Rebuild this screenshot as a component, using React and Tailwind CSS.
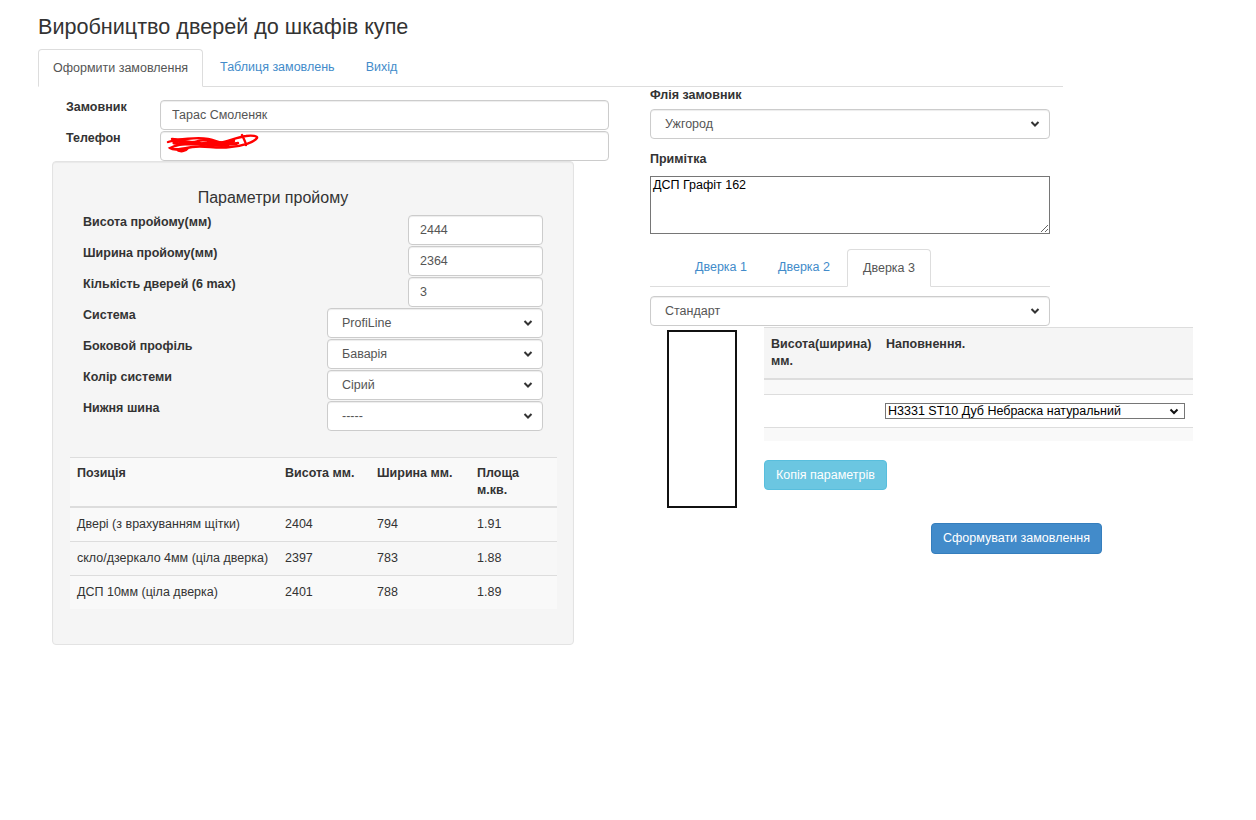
import React from "react"

const font = { fontFamily: '"Liberation Sans", Arial, sans-serif' }

function Chevron() {
  return (
    <svg width="10" height="7" viewBox="0 0 10 7" className="absolute right-[10px] top-1/2 -translate-y-1/2 pointer-events-none">
      <path d="M1.5 1.5 L5 5 L8.5 1.5" fill="none" stroke="#333" strokeWidth="2" />
    </svg>
  )
}

function Select({ value, className = "" }) {
  return (
    <div className={`relative h-[30px] ${className}`}>
      <select
        defaultValue={value}
        className="appearance-none w-full h-full rounded-[4px] border border-[#ccc] bg-white pl-[14px] pr-8 text-[12.5px] text-[#555] shadow-[inset_0_1px_1px_rgba(0,0,0,0.075)] outline-none"
      >
        <option>{value}</option>
      </select>
      <Chevron />
    </div>
  )
}

function Input({ value, className = "" }) {
  return (
    <input
      defaultValue={value}
      className={`h-[30px] rounded-[4px] border border-[#ccc] bg-white px-[11px] text-[12.5px] text-[#555] shadow-[inset_0_1px_1px_rgba(0,0,0,0.075)] outline-none ${className}`}
    />
  )
}

const params = [
  { label: "Висота пройому(мм)", value: "2444", type: "input" },
  { label: "Ширина пройому(мм)", value: "2364", type: "input" },
  { label: "Кількість дверей (6 max)", value: "3", type: "input" },
  { label: "Система", value: "ProfiLine", type: "select" },
  { label: "Боковой профіль", value: "Баварія", type: "select" },
  { label: "Колір системи", value: "Сірий", type: "select" },
  { label: "Нижня шина", value: "-----", type: "select" },
]

const rows = [
  ["Двері (з врахуванням щітки)", "2404", "794", "1.91"],
  ["скло/дзеркало 4мм (ціла дверка)", "2397", "783", "1.88"],
  ["ДСП 10мм (ціла дверка)", "2401", "788", "1.89"],
]

export default function App() {
  return (
    <div style={font} className="min-h-[820px] bg-white text-[#333] text-[12.5px] pl-[38px] pt-[14px]">
      <h1 className="text-[21.6px] leading-[26px] font-normal text-[#333]">Виробництво дверей до шкафів купе</h1>

      {/* main tabs */}
      <div className="mt-[9px] w-[1025px] flex border-b border-[#ddd] h-[38px]">
        <div className="h-[38px] px-[14px] flex items-center border border-[#ddd] border-b-white rounded-t-[4px] bg-white -mb-px text-[#555]">
          Оформити замовлення
        </div>
        <div className="ml-[2px] h-[37px] px-[15px] flex items-center text-[#428bca]">Таблиця замовлень</div>
        <div className="ml-[2px] h-[37px] px-[14px] flex items-center text-[#428bca]">Вихід</div>
      </div>

      <div className="flex">
        {/* left column */}
        <div className="ml-[14px] w-[557px] pt-[13px]">
          <div className="flex items-start">
            <div className="w-[108px] pl-[14px] font-bold leading-[15px]">Замовник</div>
            <Input value="Тарас Смоленяк" className="w-[449px]" />
          </div>
          <div className="flex items-start mt-px">
            <div className="w-[108px] pl-[14px] font-bold leading-[15px]">Телефон</div>
            <div className="relative w-[449px]">
              <Input value="" className="w-full" />
              <svg width="96" height="22" viewBox="0 0 96 22" className="absolute left-[4px] top-[2px]">
                <path
                  d="M4 9 C14 5 24 12 34 8 C44 5 50 12 60 9 C68 7 74 4 82 3 C88 2 94 3 93 5 C90 9 80 13 66 14 C52 16 40 12 28 14 C18 16 10 18 6 15 C12 12 22 10 34 11 C46 12 58 10 70 8 M8 6 C20 8 30 3 44 6 C54 8 62 13 74 10 M12 16 C16 20 22 18 24 15 M78 2 C80 6 82 10 82 12"
                  fill="none"
                  stroke="#ff0000"
                  strokeWidth="2.4"
                  strokeLinecap="round"
                />
                <path d="M10 10 C30 13 50 8 72 11 M16 8 C34 10 52 14 64 12" fill="none" stroke="#ff0000" strokeWidth="3.2" strokeLinecap="round" />
              </svg>
            </div>
          </div>

          {/* well */}
          <div className="w-[522px] bg-[#f5f5f5] border border-[#e3e3e3] rounded-[4px] shadow-[inset_0_1px_1px_rgba(0,0,0,0.05)] pt-[26px] pb-[35px]">
            <div className="text-[16px] leading-[20px] text-center pr-[80px]">Параметри пройому</div>
            <div className="mt-[7px] px-[30px] flex flex-col gap-px">
              {params.map((p) => (
                <div key={p.label} className="flex items-start justify-between h-[30px]">
                  <div className="font-bold leading-[15px]">{p.label}</div>
                  {p.type === "input" ? (
                    <Input value={p.value} className="w-[135px]" />
                  ) : (
                    <Select value={p.value} className="w-[216px]" />
                  )}
                </div>
              ))}
            </div>

            <table className="mt-[26px] ml-[17px] w-[487px] border-collapse bg-[#f9f9f9] text-left leading-[17px]">
              <thead>
                <tr className="border-t border-[#ddd] border-b-2">
                  <th className="w-[208px] px-[7px] py-[7px] align-top font-bold">Позиція</th>
                  <th className="w-[92px] px-[7px] py-[7px] align-top font-bold">Висота мм.</th>
                  <th className="w-[100px] px-[7px] py-[7px] align-top font-bold">Ширина мм.</th>
                  <th className="px-[7px] py-[7px] align-top font-bold">Площа м.кв.</th>
                </tr>
              </thead>
              <tbody>
                {rows.map((r, i) => (
                  <tr key={i} className={`border-t border-[#ddd] ${i === 1 ? "bg-[#f7f7f7]" : ""}`}>
                    {r.map((c, j) => (
                      <td key={j} className="px-[7px] py-[8px] whitespace-nowrap">{c}</td>
                    ))}
                  </tr>
                ))}
              </tbody>
            </table>
          </div>
        </div>

        {/* right column */}
        <div className="ml-[41px] w-[400px] pt-[1px]">
          <div className="font-bold leading-[15px]">Флія замовник</div>
          <Select value="Ужгород" className="mt-[6px] w-[400px]" />
          <div className="mt-[13px] font-bold leading-[15px]">Примітка</div>
          <textarea
            defaultValue="ДСП Графіт 162"
            className="mt-[9px] block w-[400px] h-[58px] border border-[#767676] px-[2px] py-[1px] text-[12.5px] text-black leading-[15px] outline-none"
          />

          {/* door tabs */}
          <div className="mt-[15px] flex border-b border-[#ddd] h-[38px] pl-[30px]">
            <div className="h-[37px] px-[15px] flex items-center text-[#428bca]">Дверка 1</div>
            <div className="h-[37px] px-[16px] flex items-center text-[#428bca]">Дверка 2</div>
            <div className="ml-px h-[38px] px-[15px] flex items-center border border-[#ddd] border-b-white rounded-t-[4px] bg-white -mb-px text-[#555]">
              Дверка 3
            </div>
          </div>

          <Select value="Стандарт" className="mt-[9px] w-[400px]" />

          <div className="flex items-start">
            <div className="ml-[17px] mt-[4px] w-[70px] h-[178px] border-2 border-[#111] shrink-0" />
            <div className="ml-[27px] mt-px">
              <table className="w-[429px] border-collapse text-left leading-[17px]">
                <thead>
                  <tr className="bg-[#f5f5f5] border-t border-[#ddd] border-b-2">
                    <th className="w-[115px] px-[7px] py-[8px] align-top font-bold">Висота(ширина) мм.</th>
                    <th className="px-[7px] py-[8px] align-top font-bold">Наповнення.</th>
                  </tr>
                </thead>
                <tbody>
                  <tr className="bg-[#f9f9f9] border-t border-[#ddd]">
                    <td className="h-[15px] p-0" />
                    <td className="h-[15px] p-0" />
                  </tr>
                  <tr className="border-t border-[#ddd] bg-white">
                    <td className="px-[7px] py-[8px]" />
                    <td className="px-[6px] py-[8px]">
                      <div className="relative w-[300px] h-[16px]">
                        <select className="appearance-none w-full h-full border border-[#767676] bg-white pl-[2px] text-[12.5px] leading-[14px] text-black outline-none">
                          <option>H3331 ST10 Дуб Небраска натуральний</option>
                        </select>
                        <svg width="10" height="7" viewBox="0 0 10 7" className="absolute right-[6px] top-[5px] pointer-events-none">
                          <path d="M1.5 1.5 L5 5 L8.5 1.5" fill="none" stroke="#111" strokeWidth="2" />
                        </svg>
                      </div>
                    </td>
                  </tr>
                  <tr className="bg-[#f9f9f9] border-t border-[#ddd]">
                    <td className="h-[14px] p-0" />
                    <td className="h-[14px] p-0" />
                  </tr>
                </tbody>
              </table>
              <button className="mt-[19px] h-[30px] px-[11px] rounded-[4px] bg-[#5bc0de] border border-[#46b8da] opacity-90 text-white text-[12.5px]">
                Копія параметрів
              </button>
            </div>
          </div>

          <button className="mt-[15px] ml-[281px] h-[31px] w-[171px] rounded-[4px] bg-[#428bca] border border-[#357ebd] text-white text-[12.5px]">
            Сформувати замовлення
          </button>
        </div>
      </div>
    </div>
  )
}
